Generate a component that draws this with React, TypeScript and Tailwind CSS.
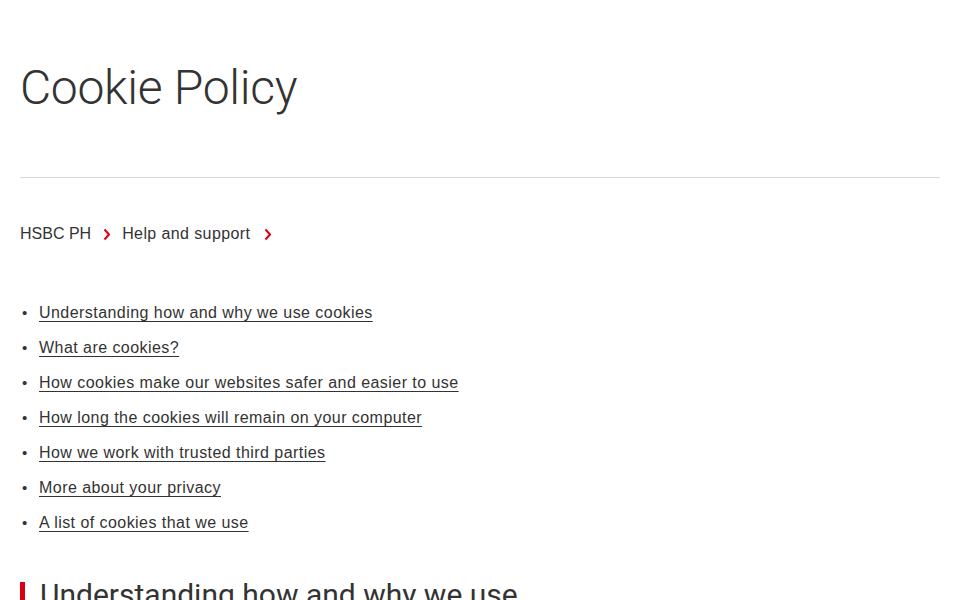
import React from "react";

const links = [
  "Understanding how and why we use cookies",
  "What are cookies?",
  "How cookies make our websites safer and easier to use",
  "How long the cookies will remain on your computer",
  "How we work with trusted third parties",
  "More about your privacy",
  "A list of cookies that we use",
];

function Chevron({ left, right }: { left: string; right: string }) {
  return (
    <svg width="8" height="13" viewBox="0 0 8 13" className={`${left} ${right}`}>
      <path d="M1.5 1.5 L6 6.5 L1.5 11.5" fill="none" stroke="#db0011" strokeWidth="2" />
    </svg>
  );
}

export default function App() {
  return (
    <div className="bg-white px-5 text-[#333] overflow-hidden h-[600px]" style={{ fontFamily: '"Liberation Sans", Arial, sans-serif' }}>
      <h1 className="pt-[58px] text-[48px] leading-[60px] font-light tracking-[-0.3px] text-[#333]" style={{ fontFamily: 'Roboto, "Liberation Sans", sans-serif' }}>
        Cookie Policy
      </h1>
      <div className="mt-[59px] border-t border-[#d7d8d6]" />
      <nav className="mt-[46px] flex items-center text-[16px] leading-[20px] text-[#333]">
        <span>HSBC PH</span>
        <Chevron left="ml-[12px]" right="mr-[11px]" />
        <span className="tracking-[0.4px]">Help and support</span>
        <Chevron left="ml-[14px]" right="mr-0" />
      </nav>
      <ul className="mt-[59px] flex flex-col gap-[15px] text-[16px] leading-[20px] tracking-[0.45px]">
        {links.map((l) => (
          <li key={l} className="flex items-center">
            <span className="w-[19px] pl-[2px] text-[#333] text-[15px]">•</span>
            <a href="#" className="underline underline-offset-[3px] decoration-1 text-[#333]">{l}</a>
          </li>
        ))}
      </ul>
      <div className="mt-[44px] flex items-start">
        <div className="w-[5px] h-[30px] bg-[#db0011] mt-[5px]" />
        <h2 className="ml-[15px] text-[30px] leading-[36px] text-[#333]" style={{ fontFamily: 'Roboto, "Liberation Sans", sans-serif' }}>
          Understanding how and why we use
        </h2>
      </div>
    </div>
  );
}
